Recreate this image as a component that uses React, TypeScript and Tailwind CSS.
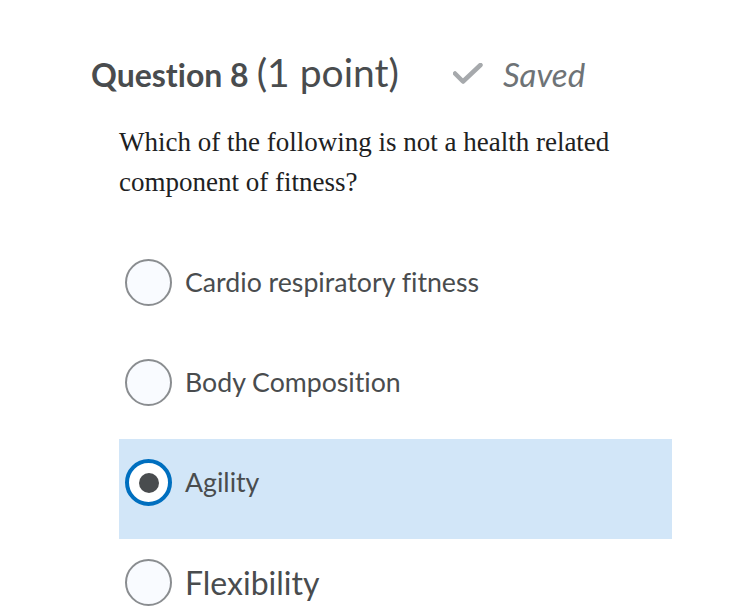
import React from 'react';

const options = [
  { id: 'a', label: 'Cardio respiratory fitness' },
  { id: 'b', label: 'Body Composition' },
  { id: 'c', label: 'Agility' },
  { id: 'd', label: 'Flexibility' },
];

const Radio: React.FC<{ checked: boolean }> = ({ checked }) =>
  checked ? (
    <div className="w-[47px] h-[47px] rounded-full border-[4px] border-[#006fbf] bg-white flex items-center justify-center shrink-0">
      <div className="w-[20px] h-[20px] rounded-full bg-[#494c4e]" />
    </div>
  ) : (
    <div className="w-[47px] h-[47px] rounded-full border-2 border-[#8a8d90] bg-[#f9fbff] shrink-0" />
  );

export default function App() {
  const selected = 'c';

  return (
    <div className="w-[750px] h-[615px] bg-white overflow-hidden font-['Lato',sans-serif] text-[#494c4e] [font-variant-ligatures:none]">
      <div className="pl-[91px] pt-[52px] flex items-baseline leading-[40px]">
        <span className="text-[32px] font-bold">Question 8</span>
        <span className="text-[39px] ml-[8px]">(1 point)</span>
        <span className="ml-[54px] self-center">
          <svg width="30" height="22" viewBox="0 0 30 22" fill="none">
            <path d="M2 10.5 L10 18.5 L27.5 2" stroke="#a6a9ac" strokeWidth="4.5" strokeLinecap="round" strokeLinejoin="round" />
          </svg>
        </span>
        <span className="ml-[20px] text-[33px] italic text-[#6e7376]">Saved</span>
      </div>

      <p className="ml-[119px] mt-[27px] w-[560px] font-['Liberation_Serif',serif] text-[27px] leading-[40px] text-[#202122]">
        Which of the following is not a health related component of fitness?
      </p>

      <div className="ml-[119px] mt-[37px] w-[553px]">
        {options.map(opt => {
          const checked = opt.id === selected;
          return (
            <div
              key={opt.id}
              className={`h-[100px] pt-[20px] pl-[6px] ${checked ? 'bg-[#d2e6f8]' : ''}`}
            >
              <div className="flex items-center gap-[13px] h-[47px]">
                <Radio checked={checked} />
                <span className={opt.id === 'd' ? 'text-[32px]' : 'text-[26.7px]'}>{opt.label}</span>
              </div>
            </div>
          );
        })}
      </div>
    </div>
  );
}
